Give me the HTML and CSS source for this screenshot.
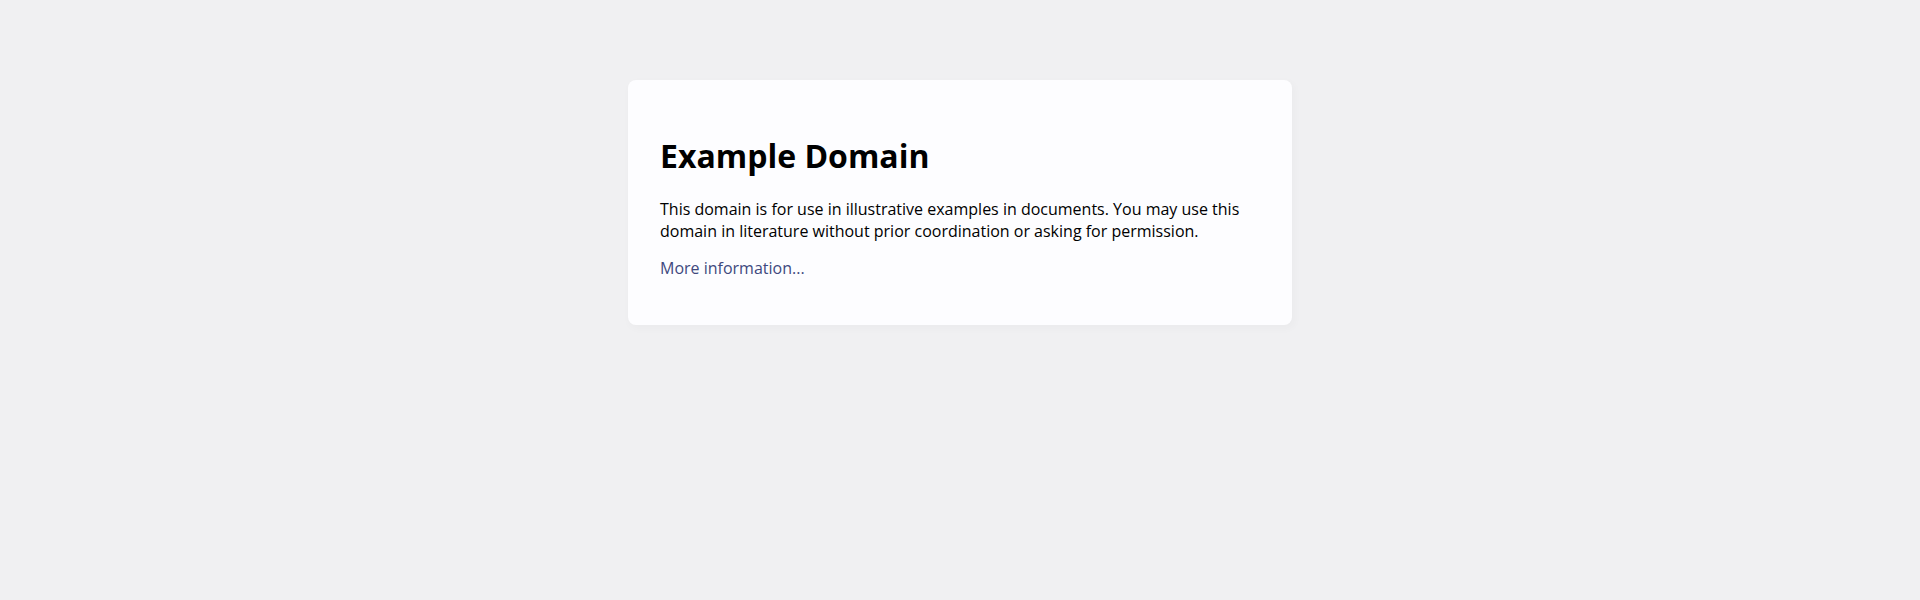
FILE: index.html
```html
<!doctype html>
<html>
<head>
<meta charset="utf-8">
<title>Example Domain</title>
<link rel="stylesheet" href="styles.css">
</head>
<body>
<div class="card">
  <h1 class="title">Example Domain</h1>
  <p class="text">This domain is for use in illustrative examples in documents. You may use this domain in literature without prior coordination or asking for permission.</p>
  <p class="text"><a class="link" href="#">More information...</a></p>
</div>
</body>
</html>
```
FILE: styles.css
```css
html, body {
  margin: 0;
  padding: 0;
}
body {
  background-color: #f0f0f2;
  font-family: "Segoe UI", "Open Sans", "Helvetica Neue", Helvetica, Arial, sans-serif;
  line-height: 1.33;
}
.card {
  width: 600px;
  margin: 80px auto;
  padding: 34px 32px 30px;
  background-color: #fdfdff;
  border-radius: 8px;
  box-shadow: 2px 3px 7px 2px rgba(0, 0, 0, 0.02);
}
.title {
  font-size: 32px;
  font-weight: 700;
  margin: 21.44px 0;
  color: #000;
}
.text {
  font-size: 16px;
  margin: 16px 0;
  color: #000;
}
.link {
  color: #40497e;
  text-decoration: none;
}
```
